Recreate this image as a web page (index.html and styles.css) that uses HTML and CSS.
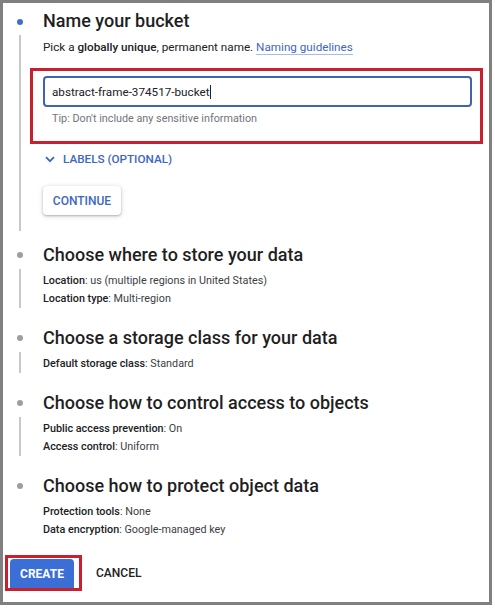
FILE: index.html
```html
<!DOCTYPE html>
<html>
<head>
<meta charset="utf-8">
<link rel="stylesheet" href="styles.css">
</head>
<body>
<div class="frame">
  <section class="step step-first">
    <div class="rail"><span class="dot dot-active"></span></div>
    <h2 class="title">Name your bucket</h2>
    <div class="rail"><span class="line"></span></div>
    <div class="body body-first">
      <p class="text">Pick a <b>globally unique</b>, permanent name. <a class="link">Naming guidelines</a></p>
      <div class="mark mark-input">
        <div class="input"><span class="value">abstract-frame-374517-bucket</span><span class="caret"></span></div>
        <p class="tip">Tip: Don't include any sensitive information</p>
      </div>
      <div class="labels">
        <svg class="chev" width="10" height="7" viewBox="0 0 10 7"><path d="M1 1.2 L5 5.2 L9 1.2" fill="none" stroke="#3c66c4" stroke-width="1.8"/></svg>
        <span>LABELS (OPTIONAL)</span>
      </div>
      <button class="btn-continue">CONTINUE</button>
    </div>
  </section>

  <section class="step">
    <div class="rail"><span class="dot"></span></div>
    <h2 class="title">Choose where to store your data</h2>
    <div class="rail"><span class="line"></span></div>
    <div class="body">
      <p class="row"><span class="k">Location</span>: us (multiple regions in United States)</p>
      <p class="row"><span class="k">Location type</span>: Multi-region</p>
    </div>
  </section>

  <section class="step">
    <div class="rail"><span class="dot"></span></div>
    <h2 class="title">Choose a storage class for your data</h2>
    <div class="rail"><span class="line"></span></div>
    <div class="body">
      <p class="row"><span class="k">Default storage class</span>: Standard</p>
    </div>
  </section>

  <section class="step">
    <div class="rail"><span class="dot"></span></div>
    <h2 class="title">Choose how to control access to objects</h2>
    <div class="rail"><span class="line"></span></div>
    <div class="body">
      <p class="row"><span class="k">Public access prevention</span>: On</p>
      <p class="row"><span class="k">Access control</span>: Uniform</p>
    </div>
  </section>

  <section class="step">
    <div class="rail"><span class="dot"></span></div>
    <h2 class="title">Choose how to protect object data</h2>
    <div class="rail"></div>
    <div class="body">
      <p class="row"><span class="k">Protection tools</span>: None</p>
      <p class="row"><span class="k">Data encryption</span>: Google-managed key</p>
    </div>
  </section>

  <div class="actions">
    <div class="mark mark-btn"><button class="btn-create">CREATE</button></div>
    <button class="btn-cancel">CANCEL</button>
  </div>
</div>
</body>
</html>
```

FILE: styles.css
```css
* { box-sizing: border-box; }
html, body { margin: 0; padding: 0; background: #fff; }
body { font-family: Roboto, "Noto Sans", Arial, sans-serif; color: #202124; }

.frame {
  width: 492px;
  height: 605px;
  border: 3px solid #808080;
  padding-top: 4px;
  background: #fff;
}

.step {
  display: grid;
  grid-template-columns: 40px 1fr;
  margin-bottom: 16px;
}
.step-first { margin-bottom: 10px; }

.rail { position: relative; display: flex; justify-content: flex-start; }
.dot {
  width: 6px; height: 6px; border-radius: 50%;
  background: #9e9e9e;
  margin: 11px 0 0 14px;
}
.dot-active { background: #3d6fd3; margin-top: 12px; }
.line {
  width: 2px;
  background: #c9c9c9;
  margin: 0 0 0 16px;
  height: 100%;
}

.title {
  margin: 0;
  font-size: 18px;
  font-weight: 500;
  line-height: 28px;
  color: #1f1f1f;
  letter-spacing: 0;
}

.body { padding-top: 3px; }
.body-first { padding-bottom: 16px; }

.text, .row, .tip { margin: 0; }
.text { font-size: 11.7px; line-height: 18px; color: #202124; }
.text b { font-weight: 500; }
.link {
  color: #3c66c4;
  text-decoration: none;
  border-bottom: 1px solid #a9bde4;
}

.mark { border: 3px solid #c9202f; }
.mark-input {
  margin: 12px 0 0 -13px;
  width: 453px;
  padding: 5px 8px 13px 10px;
}
.input {
  height: 31px;
  border: 2px solid #4264ae;
  border-radius: 4px;
  display: flex;
  align-items: center;
  padding-left: 7px;
  font-size: 11.7px;
  color: #202124;
}
.caret { width: 1px; height: 14px; background: #202124; margin-left: 1px; }
.tip { margin-top: 3px; padding-left: 9px; font-size: 10.8px; line-height: 18px; color: #70757a; }

.labels {
  margin-top: 6px;
  height: 18px;
  display: flex;
  align-items: center;
  font-size: 11.7px;
  font-weight: 500;
  color: #3c66c4;
}
.chev { margin: 0 8px 0 2px; }

.btn-continue {
  margin-top: 18px;
  height: 29px;
  width: 78px;
  padding: 0;
  border: none;
  border-radius: 4px;
  background: #fff;
  box-shadow: 0 1px 2px rgba(60,64,67,0.3), 0 1px 4px 1px rgba(60,64,67,0.15);
  font-family: inherit;
  font-size: 12px;
  font-weight: 500;
  color: #3c66c4;
}

.row { font-size: 10.8px; line-height: 18px; color: #3c4043; }
.row .k { color: #202124; font-weight: 500; }

.actions {
  display: flex;
  align-items: center;
  margin-top: 14px;
  padding-left: 2px;
}
.mark-btn { padding: 1px 5px 0 2px; }
.btn-create {
  display: block;
  width: 64px;
  height: 29px;
  border: none;
  border-radius: 4px 4px 0 0;
  background: #3b6fd6;
  color: #fff;
  font-family: inherit;
  font-size: 12px;
  font-weight: 700;
  padding: 0;
}
.btn-cancel {
  margin-left: 14px;
  border: none;
  background: none;
  padding: 0;
  font-family: inherit;
  font-size: 12px;
  font-weight: 500;
  color: #202124;
}
```
